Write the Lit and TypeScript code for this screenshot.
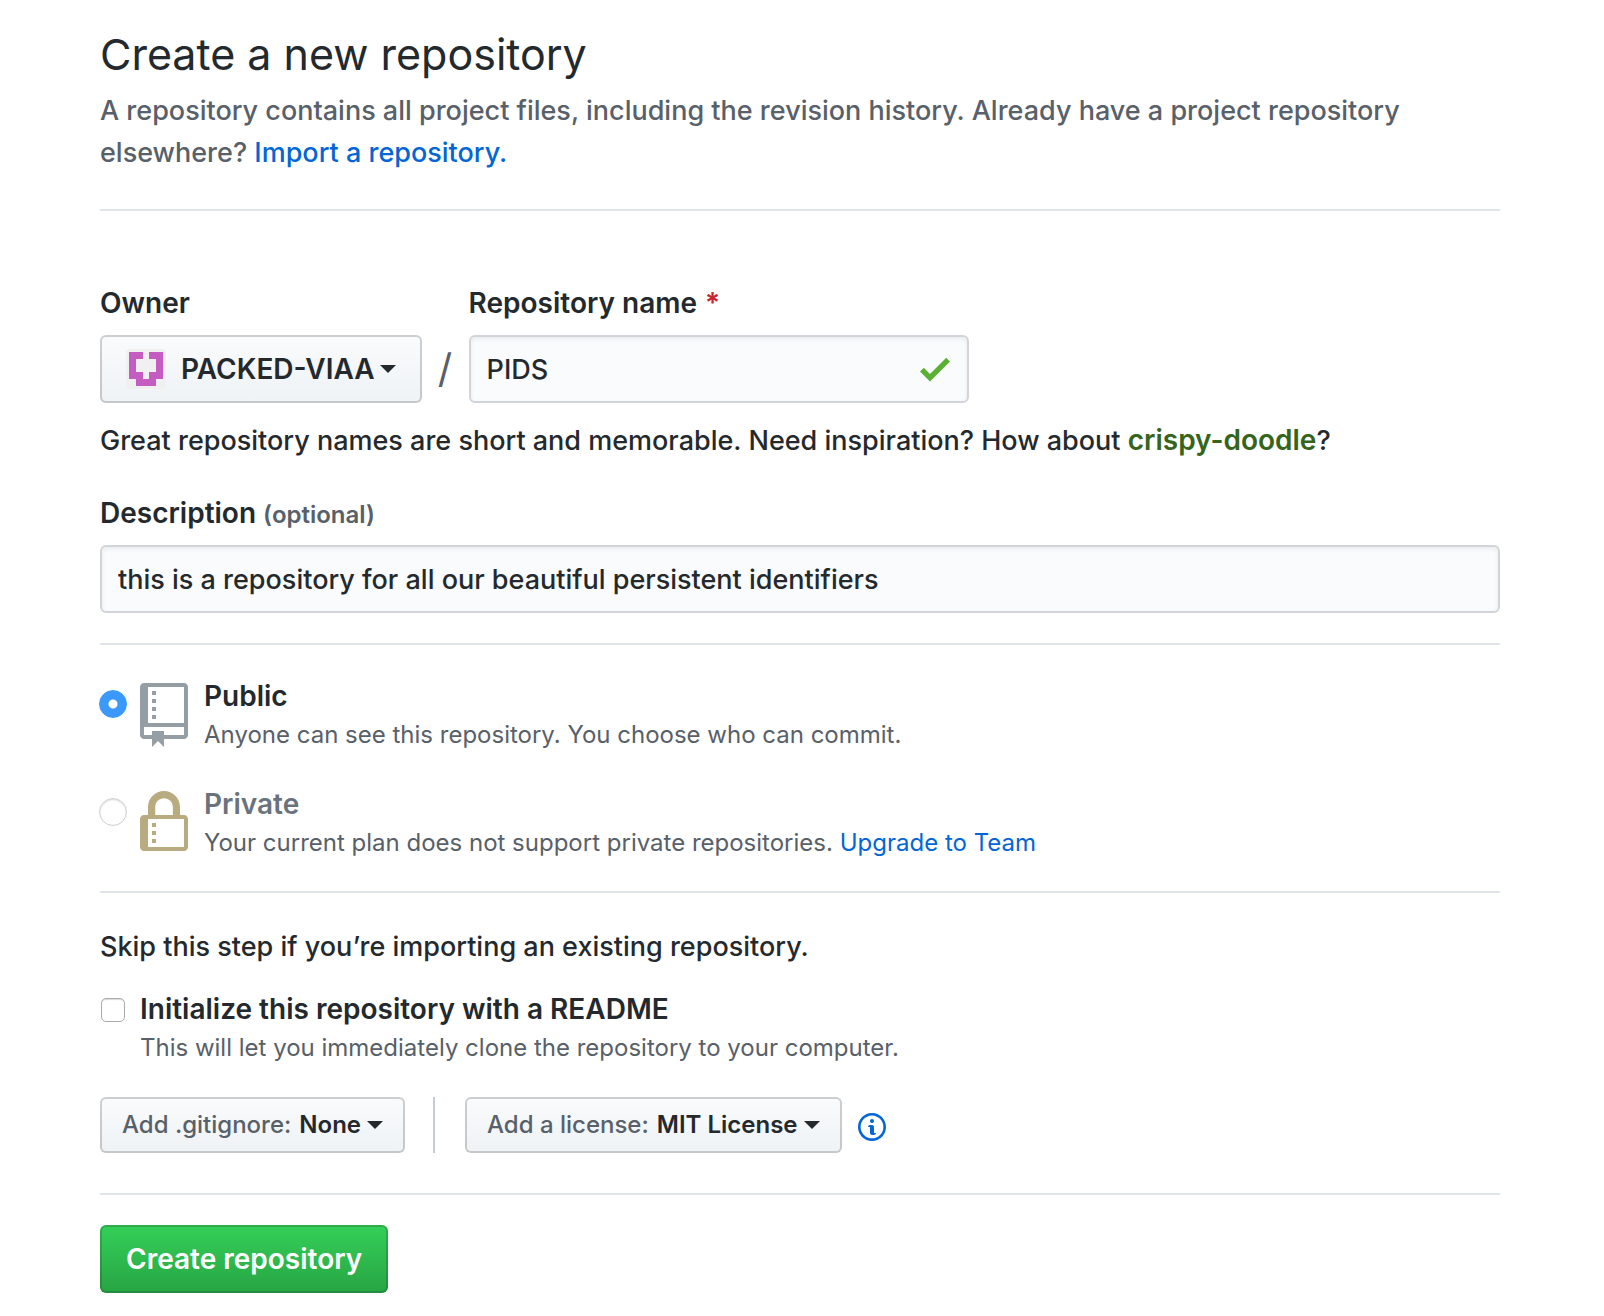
import { LitElement, html, css, svg } from "lit";
import { customElement, state } from "lit/decorators.js";

const icons = {
  repo: svg`<path d="M4 9H3V8h1v1zm0-3H3v1h1V6zm0-2H3v1h1V4zm0-2H3v1h1V2zm8-1v12c0 .55-.45 1-1 1H6v2l-1.5-1.5L3 16v-2H1c-.55 0-1-.45-1-1V1c0-.55.45-1 1-1h10c.55 0 1 .45 1 1zm-1 10H1v2h2v-1h3v1h5v-2zm0-10H2v9h9V1z"/>`,
  lock: svg`<path d="M4 13H3v-1h1v1zm8-6v7c0 .55-.45 1-1 1H1c-.55 0-1-.45-1-1V7c0-.55.45-1 1-1h1V4c0-2.2 1.8-4 4-4s4 1.8 4 4v2h1c.55 0 1 .45 1 1zM3.8 6h4.41V4c0-1.22-.98-2.2-2.2-2.2-1.22 0-2.2.98-2.2 2.2v2H3.8zM11 7H2v7h9V7zM4 8H3v1h1V8zm0 2H3v1h1v-1z"/>`,
  info: svg`<path d="M6.3 5.69a.942.942 0 0 1-.28-.7c0-.28.09-.52.28-.7.19-.18.42-.28.7-.28.28 0 .52.09.7.28.18.19.28.42.28.7 0 .28-.09.52-.28.7a1 1 0 0 1-.7.3c-.28 0-.52-.11-.7-.3zM8 7.99c-.02-.25-.11-.48-.31-.69-.2-.19-.42-.3-.69-.31H6c-.27.02-.48.13-.69.31-.2.2-.3.44-.31.69h1v3c.02.27.11.5.31.69.2.2.42.31.69.31h1c.27 0 .48-.11.69-.31.2-.19.3-.42.31-.69H8V7.98v.01zM7 2.3c-3.14 0-5.7 2.54-5.7 5.68 0 3.14 2.56 5.7 5.7 5.7s5.7-2.55 5.7-5.7c0-3.15-2.56-5.69-5.7-5.69v.01zM7 .98c3.86 0 7 3.14 7 7s-3.14 7-7 7-7-3.12-7-7 3.14-7 7-7z"/>`,
};

@customElement("app-root")
export class AppRoot extends LitElement {
  @state() private visibility = "public";

  static styles = css`
    :host {
      display: block;
      font-family: Inter, "Liberation Sans", sans-serif;
      font-size: 27px;
      font-weight: 450;
      line-height: 42px;
      color: #24292e;
      background: #fff;
    }
    * { box-sizing: border-box; }
    .page { padding: 18px 104px 24px 100px; }
    h1 { margin: 0; font-size: 43px; font-weight: 400; line-height: 72px; }
    p { margin: 0; }
    a { color: #0366d6; text-decoration: none; }
    .lead { color: #586069; }
    .head { padding-bottom: 35px; border-bottom: 2px solid #e1e4e8; }
    .field { display: flex; flex-direction: column; gap: 11px; }
    .label { font-size: 28px; font-weight: 600; }
    .label .note { line-height: 24px; }
    .names { display: flex; align-items: flex-end; margin-top: 71px; }
    .slash { width: 47px; text-align: center; font-size: 40px; font-weight: 400; line-height: 68px; color: #586069; }
    .required { color: #cb2431; margin-left: 1px; }
    .btn {
      display: inline-flex;
      align-items: center;
      font: inherit;
      font-size: 28px;
      font-weight: 600;
      color: #24292e;
      border: 2px solid rgba(27, 31, 35, 0.2);
      border-radius: 6px;
      background: #eff3f6 linear-gradient(-180deg, #fafbfc 0%, #eff3f6 90%) -2px -2px / 110% 110%;
      cursor: pointer;
      white-space: nowrap;
    }
    .owner { height: 68px; padding: 0 24px; }
    .avatar { width: 40px; height: 40px; margin-right: 15px; }
    .caret {
      margin-left: 6px;
      border: 8px solid transparent;
      border-top-color: currentColor;
      border-bottom: 0;
    }
    .owner .caret { margin-left: 5px; }
    .box { position: relative; width: 500px; max-width: 100%; }
    .text {
      display: block;
      width: 100%;
      height: 68px;
      padding: 0 16px;
      font: inherit;
      color: inherit;
      background: #fafbfc;
      border: 2px solid #d1d5da;
      border-radius: 6px;
      box-shadow: inset 0 2px 4px rgba(27, 31, 35, 0.075);
      outline: none;
    }
    .check { position: absolute; right: 19px; top: 14px; width: 30px; height: 40px; fill: #59b032; }
    .hint { margin-top: 17px; }
    .hint strong { font-size: 28px; font-weight: 600; line-height: 36px; color: #35651b; }
    .description { margin-top: 30px; }
    .note { font-size: 24px; line-height: 36px; color: #586069; }
    p.note { font-weight: 400; }
    .section { margin-top: 30px; padding-top: 30px; border-top: 2px solid #e1e4e8; }
    .choices { display: flex; flex-direction: column; gap: 30px; }
    .choice { display: flex; align-items: flex-start; }
    .visibility { min-height: 78px; }
    .radio {
      appearance: none;
      flex: none;
      width: 28px;
      height: 28px;
      margin: 15px 13px 0 -1px;
      border: 1px solid #d0d0d0;
      border-radius: 50%;
      background: #fff;
      box-shadow: inset 0 1px 2px rgba(0, 0, 0, 0.15);
    }
    .radio:checked {
      border-color: #3b99fc;
      background: radial-gradient(circle, #fff 4px, #3b99fc 5px);
      box-shadow: none;
    }
    .kind { flex: none; width: 48px; height: 64px; margin: 8px 16px 0 0; }
    .public { fill: #959da5; }
    .private { fill: #b9ab80; }
    .name { display: block; font-size: 28px; font-weight: 600; line-height: 42px; }
    .disabled { color: #6a737d; }
    .tick {
      appearance: none;
      flex: none;
      width: 24px;
      height: 24px;
      margin: 10px 15px 0 1px;
      border: 1px solid #ababab;
      border-radius: 5px;
      background: #fff;
      box-shadow: inset 0 1px 1px rgba(0, 0, 0, 0.15);
    }
    .setup { padding-top: 33px; }
    .init { margin-top: 20px; }
    .menus { display: flex; align-items: center; margin-top: 31px; }
    .small { height: 56px; padding: 0 20px; font-size: 24px; }
    .small .key { font-weight: 450; color: #586069; margin-right: 8px; }
    .rule { width: 2px; height: 56px; margin: 0 30px 0 28px; background: #c6cbd1; }
    .help { display: flex; margin-left: 16px; padding-top: 4px; }
    .help svg { width: 28px; height: 32px; fill: #0366d6; }
    .last { margin-top: 40px; }
    .primary {
      height: 68px;
      padding: 0 24px;
      color: #fff;
      background: #28a745 linear-gradient(-180deg, #34d058 0%, #28a745 90%) -2px -2px / 110% 110%;
    }
  `;

  private pick(event: Event) {
    this.visibility = (event.target as HTMLInputElement).value;
  }

  render() {
    return html`
      <main class="page">
        <header class="head">
          <h1>Create a new repository</h1>
          <p class="lead">
            A repository contains all project files, including the revision history. Already have a project repository
            elsewhere? <a href="#import">Import a repository.</a>
          </p>
        </header>

        <form @submit=${(e: Event) => e.preventDefault()}>
          <div class="names">
            <div class="field">
              <label class="label" for="owner">Owner</label>
              <button class="btn owner" id="owner" type="button" aria-haspopup="menu">
                <svg class="avatar" viewBox="0 0 40 40" aria-hidden="true">
                  <rect width="40" height="40" rx="4" fill="#f0f0f0" />
                  <path fill="#c55cc1" d="M3 3h14v7h-7v13h7v7h6v-7h7v-13h-7V3h14v27h-7v7h-20v-7h-7z" />
                </svg>
                PACKED-VIAA<span class="caret"></span>
              </button>
            </div>
            <span class="slash">/</span>
            <div class="field">
              <label class="label" for="repo">Repository name <span class="required">*</span></label>
              <div class="box">
                <input class="text" id="repo" type="text" .value=${"PIDS"} />
                <svg class="check" viewBox="0 0 12 16" aria-hidden="true"><path d="M12 5l-8 8-4-4 1.5-1.5L4 10l6.5-6.5L12 5z" /></svg>
              </div>
            </div>
          </div>
          <p class="hint">
            Great repository names are short and memorable. Need inspiration? How about <strong>crispy-doodle</strong>?
          </p>

          <div class="field description">
            <label class="label" for="description">Description <span class="note">(optional)</span></label>
            <input class="text" id="description" type="text" .value=${"this is a repository for all our beautiful persistent identifiers"} />
          </div>

          <section class="section choices">
            <div class="choice visibility">
              <input class="radio" id="public" type="radio" name="visibility" value="public"
                .checked=${this.visibility === "public"} @change=${this.pick} />
              <svg class="kind public" viewBox="0 0 12 16" aria-hidden="true">${icons.repo}</svg>
              <div>
                <label class="name" for="public">Public</label>
                <p class="note">Anyone can see this repository. You choose who can commit.</p>
              </div>
            </div>
            <div class="choice visibility">
              <input class="radio" id="private" type="radio" name="visibility" value="private" disabled />
              <svg class="kind private" viewBox="0 0 12 16" aria-hidden="true">${icons.lock}</svg>
              <div>
                <label class="name disabled" for="private">Private</label>
                <p class="note">
                  Your current plan does not support private repositories. <a href="#upgrade">Upgrade to Team</a>
                </p>
              </div>
            </div>
          </section>

          <section class="section setup">
            <p>Skip this step if you’re importing an existing repository.</p>
            <div class="choice init">
              <input class="tick" id="readme" type="checkbox" />
              <div>
                <label class="name" for="readme">Initialize this repository with a README</label>
                <p class="note">This will let you immediately clone the repository to your computer.</p>
              </div>
            </div>
            <div class="menus">
              <button class="btn small" type="button" aria-haspopup="menu">
                <span class="key">Add .gitignore:</span>None<span class="caret"></span>
              </button>
              <span class="rule"></span>
              <button class="btn small" type="button" aria-haspopup="menu">
                <span class="key">Add a license:</span>MIT License<span class="caret"></span>
              </button>
              <a class="help" href="#licenses" aria-label="About licenses"><svg viewBox="0 0 14 16" aria-hidden="true">${icons.info}</svg></a>
            </div>
          </section>

          <div class="section last">
            <button class="btn primary" type="submit">Create repository</button>
          </div>
        </form>
      </main>
    `;
  }
}
